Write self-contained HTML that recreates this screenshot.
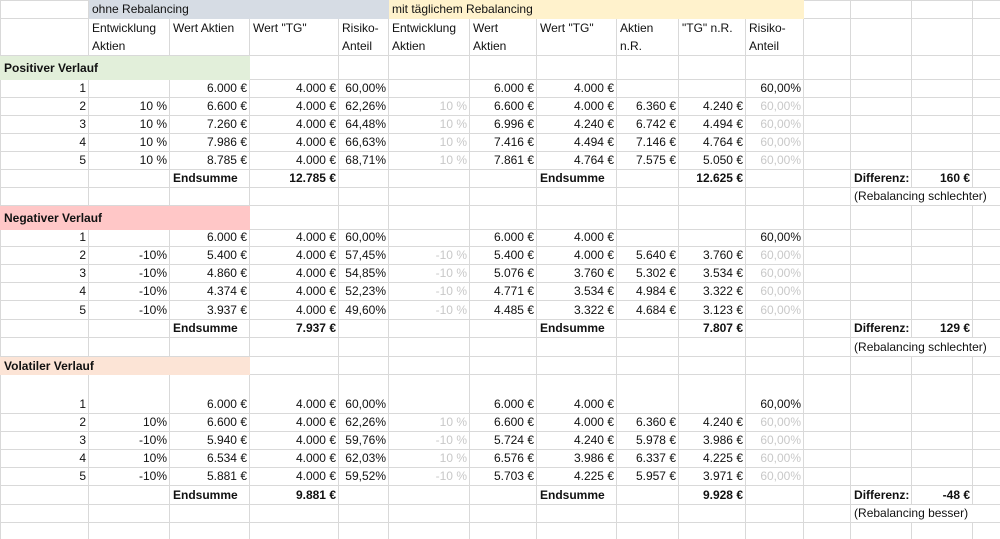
<!DOCTYPE html>
<html><head><meta charset="utf-8"><style>
html,body{margin:0;padding:0;background:#fff;width:1000px;height:539px;overflow:hidden}
table{border-collapse:collapse;table-layout:fixed;width:1000px;font-family:"Liberation Sans",sans-serif;font-size:12px;color:#111}
td{border:1px solid #d9d9d9;padding:0 2px 2px 3px;white-space:nowrap;overflow:hidden;vertical-align:bottom;line-height:14px}
td.r{text-align:right}
td.g{color:#c8c8c8;text-align:right}
td.b{font-weight:bold}
tr.h td{vertical-align:top;line-height:18px;padding:0 2px 0 3px}
.blu{background:#d6dce4;border-color:#d6dce4}
.org{background:#fff2cc;border-color:#fff2cc}
.grn{background:#e2efda;border-color:#e2efda}
.pnk{background:#ffc7c7;border-color:#ffc7c7}
.pch{background:#fce4d6;border-color:#fce4d6}
td.m{vertical-align:middle;padding:0 2px 0 3px}
</style></head><body>
<table>
<colgroup><col style="width:88px"><col style="width:81px"><col style="width:80px"><col style="width:89px"><col style="width:50px"><col style="width:81px"><col style="width:67px"><col style="width:80px"><col style="width:62px"><col style="width:67px"><col style="width:58px"><col style="width:47px"><col style="width:61px"><col style="width:61px"><col style="width:28px"></colgroup>
<tr style="height:18px"><td></td><td colspan="4" class="blu">ohne Rebalancing</td><td colspan="6" class="org">mit täglichem Rebalancing</td><td></td><td></td><td></td><td></td></tr>
<tr class="h" style="height:36px"><td></td><td>Entwicklung<br>Aktien</td><td>Wert Aktien</td><td>Wert "TG"</td><td>Risiko-<br>Anteil</td><td>Entwicklung<br>Aktien</td><td>Wert<br>Aktien</td><td>Wert "TG"</td><td>Aktien<br>n.R.</td><td>"TG" n.R.</td><td>Risiko-<br>Anteil</td><td></td><td></td><td></td><td></td></tr>
<tr style="height:24px"><td colspan="3" class="b grn m">Positiver Verlauf</td><td></td><td></td><td></td><td></td><td></td><td></td><td></td><td></td><td></td><td></td><td></td><td></td></tr>
<tr style="height:18px"><td class="r">1</td><td></td><td class="r">6.000 €</td><td class="r">4.000 €</td><td class="r">60,00%</td><td></td><td class="r">6.000 €</td><td class="r">4.000 €</td><td></td><td></td><td class="r">60,00%</td><td></td><td></td><td></td><td></td></tr>
<tr style="height:18px"><td class="r">2</td><td class="r">10 %</td><td class="r">6.600 €</td><td class="r">4.000 €</td><td class="r">62,26%</td><td class="g">10 %</td><td class="r">6.600 €</td><td class="r">4.000 €</td><td class="r">6.360 €</td><td class="r">4.240 €</td><td class="g">60,00%</td><td></td><td></td><td></td><td></td></tr>
<tr style="height:18px"><td class="r">3</td><td class="r">10 %</td><td class="r">7.260 €</td><td class="r">4.000 €</td><td class="r">64,48%</td><td class="g">10 %</td><td class="r">6.996 €</td><td class="r">4.240 €</td><td class="r">6.742 €</td><td class="r">4.494 €</td><td class="g">60,00%</td><td></td><td></td><td></td><td></td></tr>
<tr style="height:18px"><td class="r">4</td><td class="r">10 %</td><td class="r">7.986 €</td><td class="r">4.000 €</td><td class="r">66,63%</td><td class="g">10 %</td><td class="r">7.416 €</td><td class="r">4.494 €</td><td class="r">7.146 €</td><td class="r">4.764 €</td><td class="g">60,00%</td><td></td><td></td><td></td><td></td></tr>
<tr style="height:18px"><td class="r">5</td><td class="r">10 %</td><td class="r">8.785 €</td><td class="r">4.000 €</td><td class="r">68,71%</td><td class="g">10 %</td><td class="r">7.861 €</td><td class="r">4.764 €</td><td class="r">7.575 €</td><td class="r">5.050 €</td><td class="g">60,00%</td><td></td><td></td><td></td><td></td></tr>
<tr style="height:18px"><td></td><td></td><td class="b">Endsumme</td><td class="r b">12.785 €</td><td></td><td></td><td></td><td class="b">Endsumme</td><td></td><td class="r b">12.625 €</td><td></td><td></td><td class="b">Differenz:</td><td class="r b">160 €</td><td></td></tr>
<tr style="height:18px"><td></td><td></td><td></td><td></td><td></td><td></td><td></td><td></td><td></td><td></td><td></td><td></td><td colspan="3" style="overflow:visible">(Rebalancing schlechter)</td></tr>
<tr style="height:24px"><td colspan="3" class="b pnk m">Negativer Verlauf</td><td></td><td></td><td></td><td></td><td></td><td></td><td></td><td></td><td></td><td></td><td></td><td></td></tr>
<tr style="height:17px"><td class="r">1</td><td></td><td class="r">6.000 €</td><td class="r">4.000 €</td><td class="r">60,00%</td><td></td><td class="r">6.000 €</td><td class="r">4.000 €</td><td></td><td></td><td class="r">60,00%</td><td></td><td></td><td></td><td></td></tr>
<tr style="height:18px"><td class="r">2</td><td class="r">-10%</td><td class="r">5.400 €</td><td class="r">4.000 €</td><td class="r">57,45%</td><td class="g">-10 %</td><td class="r">5.400 €</td><td class="r">4.000 €</td><td class="r">5.640 €</td><td class="r">3.760 €</td><td class="g">60,00%</td><td></td><td></td><td></td><td></td></tr>
<tr style="height:18px"><td class="r">3</td><td class="r">-10%</td><td class="r">4.860 €</td><td class="r">4.000 €</td><td class="r">54,85%</td><td class="g">-10 %</td><td class="r">5.076 €</td><td class="r">3.760 €</td><td class="r">5.302 €</td><td class="r">3.534 €</td><td class="g">60,00%</td><td></td><td></td><td></td><td></td></tr>
<tr style="height:18px"><td class="r">4</td><td class="r">-10%</td><td class="r">4.374 €</td><td class="r">4.000 €</td><td class="r">52,23%</td><td class="g">-10 %</td><td class="r">4.771 €</td><td class="r">3.534 €</td><td class="r">4.984 €</td><td class="r">3.322 €</td><td class="g">60,00%</td><td></td><td></td><td></td><td></td></tr>
<tr style="height:19px"><td class="r">5</td><td class="r">-10%</td><td class="r">3.937 €</td><td class="r">4.000 €</td><td class="r">49,60%</td><td class="g">-10 %</td><td class="r">4.485 €</td><td class="r">3.322 €</td><td class="r">4.684 €</td><td class="r">3.123 €</td><td class="g">60,00%</td><td></td><td></td><td></td><td></td></tr>
<tr style="height:18px"><td></td><td></td><td class="b">Endsumme</td><td class="r b">7.937 €</td><td></td><td></td><td></td><td class="b">Endsumme</td><td></td><td class="r b">7.807 €</td><td></td><td></td><td class="b">Differenz:</td><td class="r b">129 €</td><td></td></tr>
<tr style="height:19px"><td></td><td></td><td></td><td></td><td></td><td></td><td></td><td></td><td></td><td></td><td></td><td></td><td colspan="3" style="overflow:visible">(Rebalancing schlechter)</td></tr>
<tr style="height:18px"><td colspan="3" class="b pch m">Volatiler Verlauf</td><td></td><td></td><td></td><td></td><td></td><td></td><td></td><td></td><td></td><td></td><td></td><td></td></tr>
<tr style="height:39px"><td class="r">1</td><td></td><td class="r">6.000 €</td><td class="r">4.000 €</td><td class="r">60,00%</td><td></td><td class="r">6.000 €</td><td class="r">4.000 €</td><td></td><td></td><td class="r">60,00%</td><td></td><td></td><td></td><td></td></tr>
<tr style="height:18px"><td class="r">2</td><td class="r">10%</td><td class="r">6.600 €</td><td class="r">4.000 €</td><td class="r">62,26%</td><td class="g">10 %</td><td class="r">6.600 €</td><td class="r">4.000 €</td><td class="r">6.360 €</td><td class="r">4.240 €</td><td class="g">60,00%</td><td></td><td></td><td></td><td></td></tr>
<tr style="height:18px"><td class="r">3</td><td class="r">-10%</td><td class="r">5.940 €</td><td class="r">4.000 €</td><td class="r">59,76%</td><td class="g">-10 %</td><td class="r">5.724 €</td><td class="r">4.240 €</td><td class="r">5.978 €</td><td class="r">3.986 €</td><td class="g">60,00%</td><td></td><td></td><td></td><td></td></tr>
<tr style="height:18px"><td class="r">4</td><td class="r">10%</td><td class="r">6.534 €</td><td class="r">4.000 €</td><td class="r">62,03%</td><td class="g">10 %</td><td class="r">6.576 €</td><td class="r">3.986 €</td><td class="r">6.337 €</td><td class="r">4.225 €</td><td class="g">60,00%</td><td></td><td></td><td></td><td></td></tr>
<tr style="height:18px"><td class="r">5</td><td class="r">-10%</td><td class="r">5.881 €</td><td class="r">4.000 €</td><td class="r">59,52%</td><td class="g">-10 %</td><td class="r">5.703 €</td><td class="r">4.225 €</td><td class="r">5.957 €</td><td class="r">3.971 €</td><td class="g">60,00%</td><td></td><td></td><td></td><td></td></tr>
<tr style="height:19px"><td></td><td></td><td class="b">Endsumme</td><td class="r b">9.881 €</td><td></td><td></td><td></td><td class="b">Endsumme</td><td></td><td class="r b">9.928 €</td><td></td><td></td><td class="b">Differenz:</td><td class="r b">-48 €</td><td></td></tr>
<tr style="height:18px"><td></td><td></td><td></td><td></td><td></td><td></td><td></td><td></td><td></td><td></td><td></td><td></td><td colspan="3" style="overflow:visible">(Rebalancing besser)</td></tr>
<tr style="height:18px"><td></td><td></td><td></td><td></td><td></td><td></td><td></td><td></td><td></td><td></td><td></td><td></td><td></td><td></td><td></td></tr>
</table>
</body></html>
